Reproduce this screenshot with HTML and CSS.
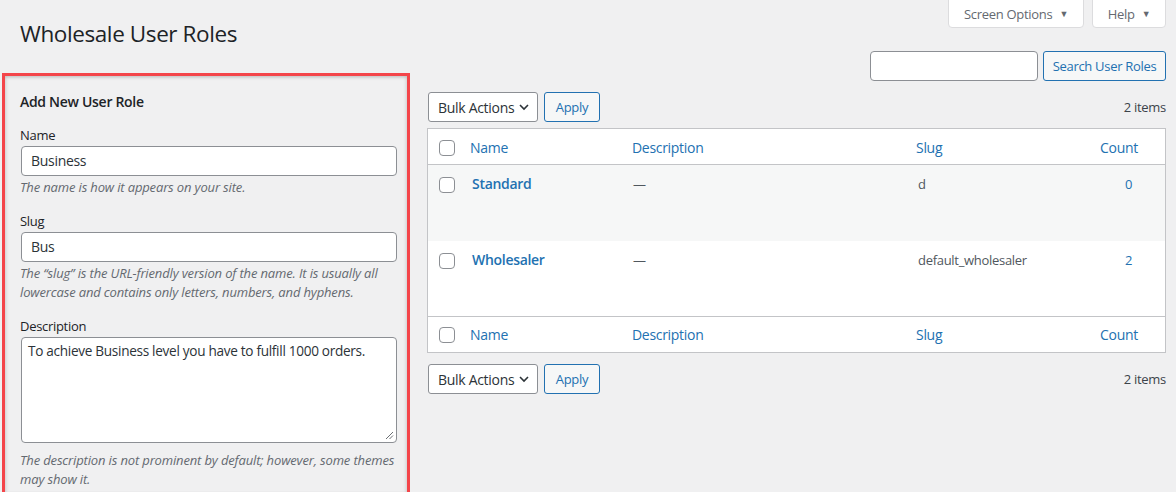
FILE: index.html
```html
<!DOCTYPE html>
<html>
<head>
<meta charset="utf-8">
<link rel="stylesheet" href="styles.css">
</head>
<body>
<div class="screen-meta">
  <button class="meta-tab tab-opts">Screen Options <span class="tri">▼</span></button>
  <button class="meta-tab tab-help">Help <span class="tri">▼</span></button>
</div>
<div class="wrap">
  <h1 class="title">Wholesale User Roles</h1>
  <div class="cols">
    <div class="col-left">
      <h2 class="form-title">Add New User Role</h2>
      <div class="field">
        <label class="lbl">Name</label>
        <div class="input">Business</div>
        <p class="help">The name is how it appears on your site.</p>
      </div>
      <div class="field">
        <label class="lbl">Slug</label>
        <div class="input">Bus</div>
        <p class="help">The “slug” is the URL-friendly version of the name. It is usually all lowercase and contains only letters, numbers, and hyphens.</p>
      </div>
      <div class="field">
        <label class="lbl">Description</label>
        <div class="textarea">To achieve Business level you have to fulfill 1000 orders.
          <svg class="grip" width="9" height="9" viewBox="0 0 9 9"><path d="M8 1 L1 8 M8 4.5 L4.5 8" stroke="#6b6f73" stroke-width="1"/></svg>
        </div>
        <p class="help help-ta">The description is not prominent by default; however, some themes may show it.</p>
      </div>
    </div>
    <div class="col-right">
      <div class="search-row">
        <div class="search-input"></div>
        <button class="btn btn-search">Search User Roles</button>
      </div>
      <div class="toolbar">
        <div class="select">Bulk Actions <svg class="chev" width="12" height="12" viewBox="0 0 12 12"><path d="M2 4 L6 8 L10 4" fill="none" stroke="#2c3338" stroke-width="1.6"/></svg></div>
        <button class="btn btn-apply">Apply</button>
        <span class="items">2 items</span>
      </div>
      <div class="table">
        <div class="row head">
          <span class="cb"></span>
          <span class="c-name link">Name</span>
          <span class="c-desc link">Description</span>
          <span class="c-slug link">Slug</span>
          <span class="c-count link">Count</span>
        </div>
        <div class="row body alt">
          <span class="cb"></span>
          <span class="c-name"><strong class="link">Standard</strong></span>
          <span class="c-desc txt">—</span>
          <span class="c-slug txt">d</span>
          <span class="c-count num link">0</span>
        </div>
        <div class="row body">
          <span class="cb"></span>
          <span class="c-name"><strong class="link">Wholesaler</strong></span>
          <span class="c-desc txt">—</span>
          <span class="c-slug txt">default_wholesaler</span>
          <span class="c-count num link">2</span>
        </div>
        <div class="row head foot">
          <span class="cb"></span>
          <span class="c-name link">Name</span>
          <span class="c-desc link">Description</span>
          <span class="c-slug link">Slug</span>
          <span class="c-count link">Count</span>
        </div>
      </div>
      <div class="toolbar bottom">
        <div class="select">Bulk Actions <svg class="chev" width="12" height="12" viewBox="0 0 12 12"><path d="M2 4 L6 8 L10 4" fill="none" stroke="#2c3338" stroke-width="1.6"/></svg></div>
        <button class="btn btn-apply">Apply</button>
        <span class="items">2 items</span>
      </div>
    </div>
  </div>
</div>
</body>
</html>
```
FILE: styles.css
```css
* { box-sizing: border-box; }
html, body { margin: 0; padding: 0; }
body {
  background: #f0f0f1;
  font-family: "Open Sans", "Noto Sans", sans-serif;
  font-size: 13px;
  letter-spacing: -0.3px;
  color: #3c434a;
  width: 1176px;
  height: 492px;
  overflow: hidden;
  position: relative;
}
button { font-family: inherit; letter-spacing: inherit; }

.screen-meta {
  position: absolute;
  top: 0;
  right: 10px;
  display: flex;
  gap: 8px;
}
.meta-tab {
  height: 29px;
  margin-top: -1px;
  padding: 0;
  background: #fff;
  border: 1px solid #dcdcde;
  border-radius: 0 0 4px 4px;
  font-size: 13px;
  color: #646970;
  display: flex;
  align-items: center;
  justify-content: center;
  gap: 7px;
  white-space: nowrap;
}
.tab-opts { width: 136px; }
.tab-help { width: 74px; }
.tri { font-size: 9px; color: #646970; }

.wrap { padding: 0 10px 0 2px; }
.title {
  margin: 0;
  padding: 19px 0 0 18px;
  height: 51px;
  font-size: 22.5px;
  letter-spacing: -0.4px;
  font-weight: 400;
  line-height: 30px;
  color: #1d2327;
}
.cols { display: flex; gap: 17px; align-items: flex-start; }

.col-left {
  width: 408px;
  margin-top: 22px;
  border: 3px solid #f4454a;
  box-shadow: inset 0 2px 3px rgba(0,0,0,0.12), inset 2px 0 3px rgba(0,0,0,0.06), inset -2px 0 3px rgba(0,0,0,0.06);
  padding: 16px 8px 4px 15px;
}
.form-title {
  margin: 0 0 13px;
  font-size: 14px;
  font-weight: 600;
  line-height: 20px;
  color: #1d2327;
}
.field { margin-bottom: 14px; }
.field:last-child { margin-bottom: 0; }
.lbl { display: block; line-height: 20px; color: #1d2327; margin-bottom: 1px; }
.input {
  height: 30px;
  margin-left: 1px;
  margin-right: 2px;
  background: #fff;
  border: 1px solid #8c8f94;
  border-radius: 4px;
  padding: 0 9px;
  line-height: 28px;
  font-size: 14px;
  color: #2c3338;
}
.textarea {
  position: relative;
  height: 106px;
  margin-left: 1px;
  margin-right: 2px;
  background: #fff;
  border: 1px solid #8c8f94;
  border-radius: 4px;
  padding: 3px 6px;
  line-height: 20px;
  font-size: 13.6px;
  color: #2c3338;
}
.grip { position: absolute; right: 2px; bottom: 2px; }
.help {
  margin: 2px 0 0;
  font-style: italic;
  letter-spacing: -0.15px;
  line-height: 19px;
  color: #646970;
}
.help-ta { margin-top: 8px; }

.col-right { flex: 1; }
.search-row { display: flex; justify-content: flex-end; gap: 5px; height: 30px; }
.search-input {
  width: 168px;
  height: 30px;
  background: #fff;
  border: 1px solid #8c8f94;
  border-radius: 4px;
}
.btn {
  height: 30px;
  padding: 0 10px;
  background: #f6f7f7;
  border: 1px solid #2271b1;
  border-radius: 3px;
  color: #2271b1;
  font-size: 13px;
  line-height: 28px;
}
.btn-search { width: 123px; padding: 0; }
.btn-apply { width: 56px; padding: 0; }
.toolbar {
  display: flex;
  align-items: center;
  gap: 6px;
  margin-top: 11px;
  padding-left: 1px;
  height: 30px;
}
.toolbar.bottom { margin-top: 11px; }
.select {
  width: 110px;
  height: 30px;
  background: #fff;
  border: 1px solid #8c8f94;
  border-radius: 3px;
  padding: 0 0 0 9px;
  display: flex;
  align-items: center;
  gap: 4px;
  font-size: 14px;
  color: #2c3338;
}
.items { margin-left: auto; color: #3c434a; }

.table {
  margin-top: 6px;
  background: #fff;
  border: 1px solid #c3c4c7;
}
.row {
  display: grid;
  grid-template-columns: 42px 162px 284px 170px 1fr;
  align-items: start;
}
.row.head { height: 36px; padding-top: 2px; align-items: center; border-bottom: 1px solid #c3c4c7; font-size: 14px; }
.row.foot { border-bottom: 0; border-top: 1px solid #c3c4c7; height: 36px; padding-top: 0; }
.row.body { height: 75px; padding-top: 9px; font-size: 13px; }
.row.alt { background: #f6f7f7; height: 76px; }
.cb {
  width: 16px;
  height: 16px;
  margin-left: 11px;
  background: #fff;
  border: 1px solid #8c8f94;
  border-radius: 4px;
}
.row.body .cb { margin-top: 3px; }
.link { color: #2271b1; }
.row.body .c-name strong { font-weight: 600; font-size: 14px; padding-left: 2px; line-height: 20px; }
.txt { color: #50575e; line-height: 20px; padding-left: 1px; }
.c-slug.txt { padding-left: 2px; }
.c-count { padding-left: 14px; }
.num { padding-left: 39px; line-height: 20px; }
```
